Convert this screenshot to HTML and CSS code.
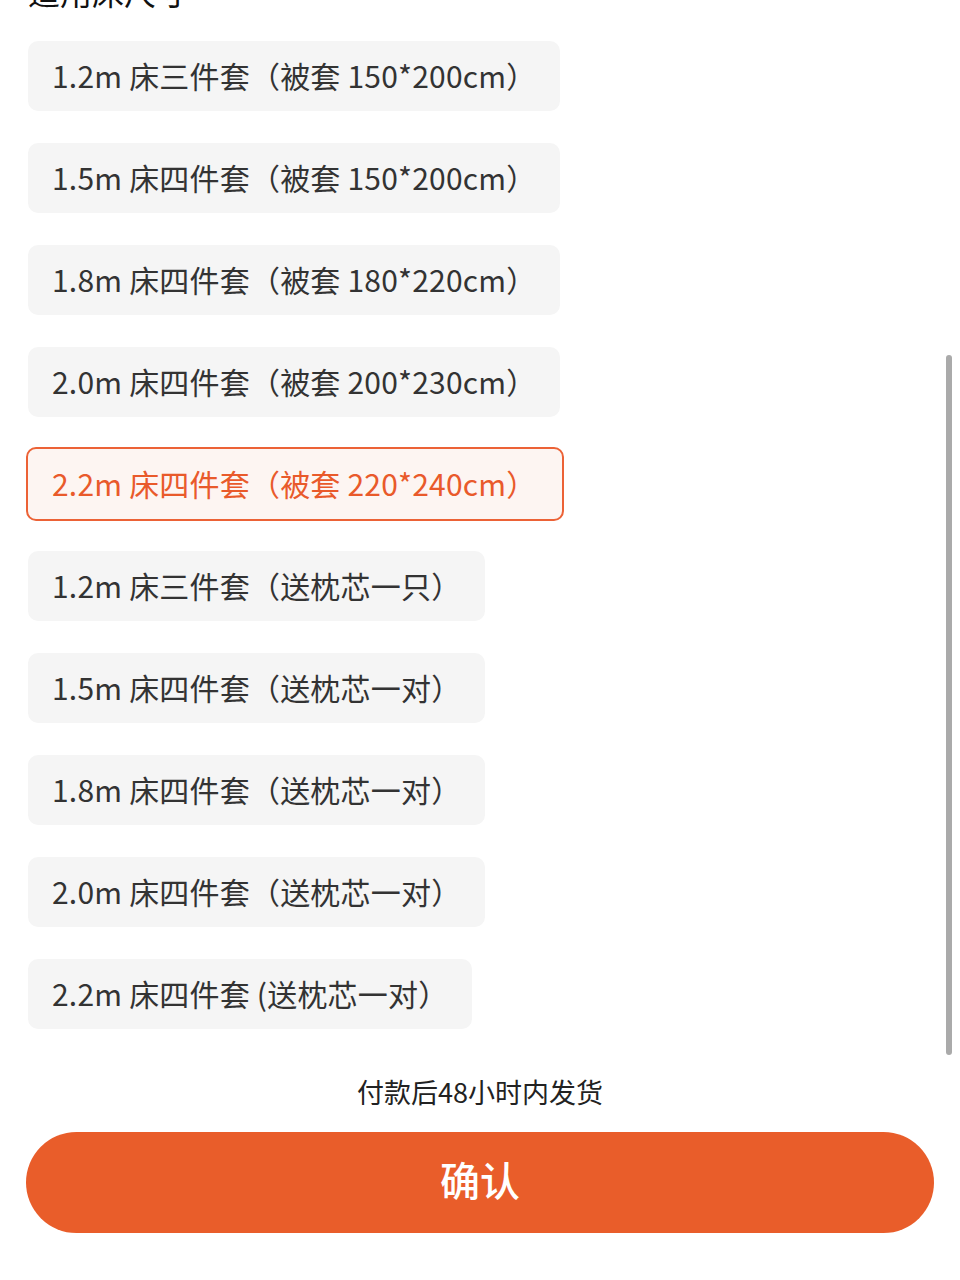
FILE: index.html
```html
<!DOCTYPE html>
<html>
<head>
  <meta charset="UTF-8">
  <title>选择规格</title>
  <link rel="stylesheet" href="styles.css">
</head>
<body>

<div class="sheet">
  <h3 class="groupTitle">适用床尺寸</h3>

  <div class="chipList">
    <div class="chip">1.2m 床三件套（被套 150*200cm）</div>
    <div class="chip">1.5m 床四件套（被套 150*200cm）</div>
    <div class="chip">1.8m 床四件套（被套 180*220cm）</div>
    <div class="chip">2.0m 床四件套（被套 200*230cm）</div>
    <div class="chip selected">2.2m 床四件套（被套 220*240cm）</div>
    <div class="chip">1.2m 床三件套（送枕芯一只）</div>
    <div class="chip">1.5m 床四件套（送枕芯一对）</div>
    <div class="chip">1.8m 床四件套（送枕芯一对）</div>
    <div class="chip">2.0m 床四件套（送枕芯一对）</div>
    <div class="chip">2.2m 床四件套 (送枕芯一对）</div>
  </div>

  <div class="scrollbar"></div>
</div>

<footer>
  <p class="shipNote">付款后48小时内发货</p>
  <button class="confirmBtn">确认</button>
</footer>

</body>
</html>
```

FILE: styles.css
```css
body {
  margin: 0;
  background: #fff;
  color: #333;
  font-family: "Noto Sans CJK SC", "Noto Sans", sans-serif;
  overflow: hidden;
}

.sheet {
  display: flow-root;
  position: relative;
  padding: 0 28px;
  height: 1060px;
}

.groupTitle {
  margin: -26px 0 0 0;
  font-size: 32px;
  line-height: 34px;
  font-weight: 400;
  color: #111;
}

.chipList {
  display: flex;
  flex-direction: column;
  align-items: flex-start;
  gap: 32px;
  margin-top: 33px;
}

.chip {
  height: 70px;
  line-height: 68px;
  padding: 0 24px;
  background: #f5f5f5;
  border-radius: 10px;
  font-size: 30px;
  letter-spacing: 0.2px;
  color: #333;
  white-space: nowrap;
  box-sizing: border-box;
}

.chip.selected {
  margin: -2px 0 -2px -2px;
  height: 74px;
  line-height: 68px;
  padding: 0 26px 0 24px;
  background: #fdf5f2;
  border: 2px solid #ec6236;
  color: #e95a2b;
}

.scrollbar {
  position: absolute;
  right: 8px;
  top: 355px;
  width: 6px;
  height: 700px;
  border-radius: 3px;
  background: #aaa;
}

footer {
  padding: 0 26px;
  text-align: center;
}

.shipNote {
  margin: 16px 0 24px;
  font-size: 27px;
  line-height: 32px;
  color: #222;
}

.confirmBtn {
  display: block;
  width: 100%;
  height: 101px;
  padding: 0 0 8px;
  border: none;
  border-radius: 51px;
  background: #e95d2a;
  color: #fff;
  font-family: "Noto Sans CJK SC", sans-serif;
  font-size: 40px;
  font-weight: 500;
}
```
